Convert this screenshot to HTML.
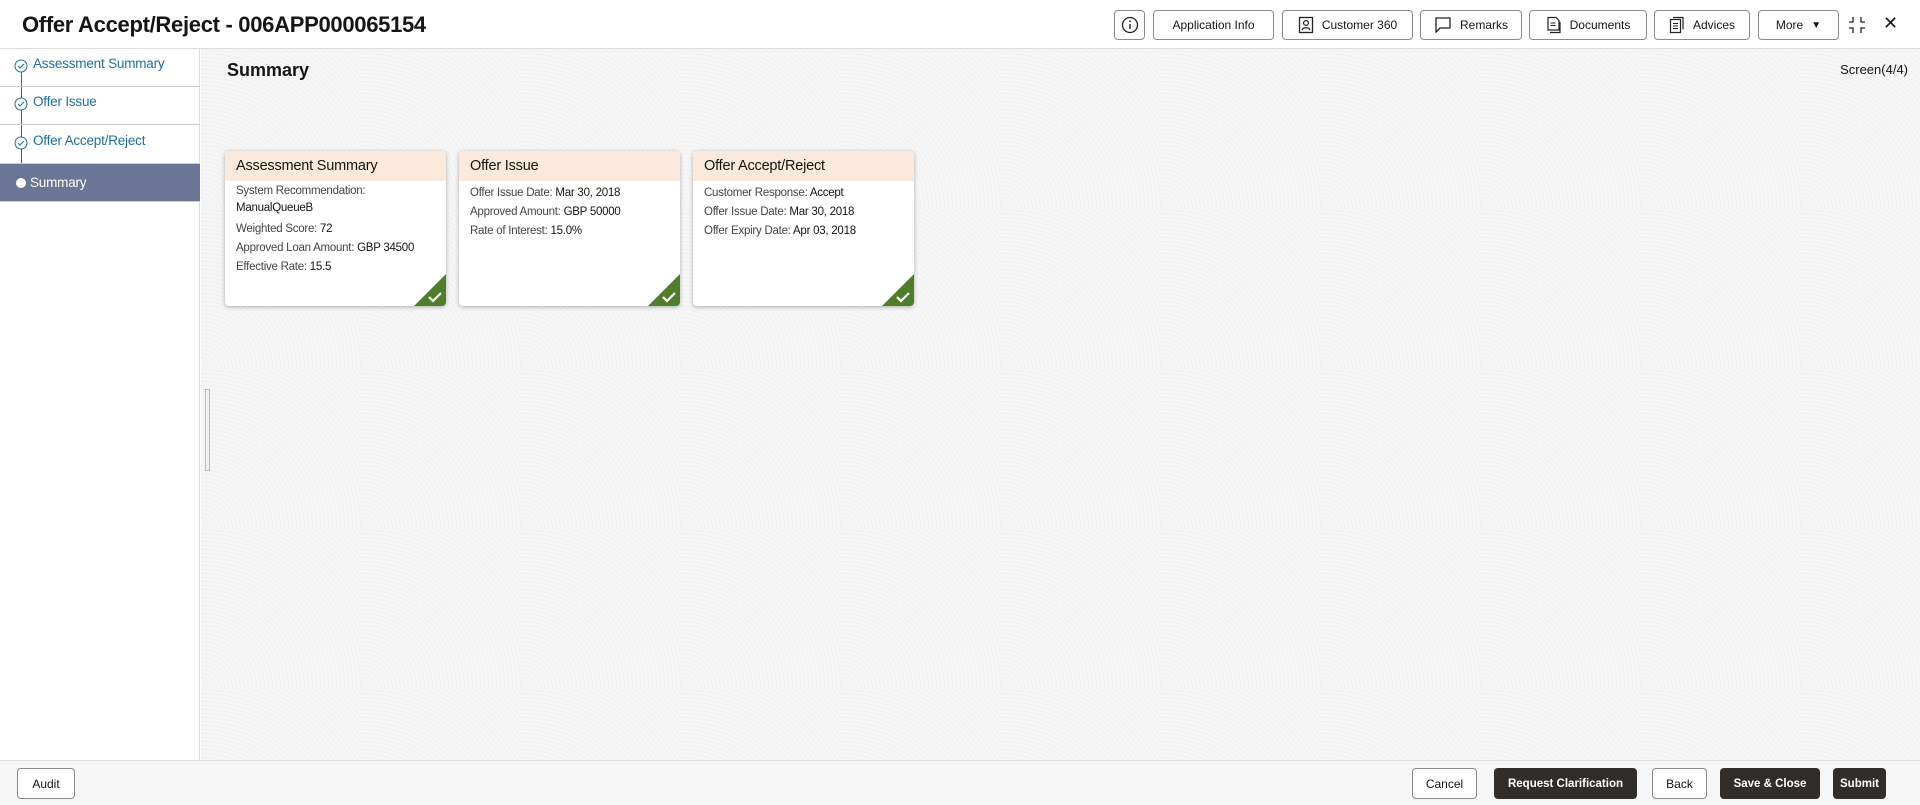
<!DOCTYPE html>
<html><head><meta charset="utf-8"><style>
*{box-sizing:border-box;margin:0;padding:0}
body{width:1920px;height:805px;overflow:hidden;font-family:"Liberation Sans",sans-serif;color:#161513;background:#fff;position:relative}
.hdr{position:absolute;left:0;top:0;width:1920px;height:49px;border-bottom:1px solid #ddd;background:#fff}
.title{position:absolute;left:22px;top:12px;font-size:22px;font-weight:bold;letter-spacing:-0.3px}
.btn{position:absolute;top:10px;height:30px;border:1px solid #8a8a8a;border-radius:4px;background:#fff;font-size:12px;display:flex;align-items:center;justify-content:center;gap:8px}
.side{position:absolute;left:0;top:49px;width:200px;height:711px;background:#fff;border-right:1px solid #ddd}
.it{position:absolute;left:0;width:200px;height:38px;border-bottom:1px solid #ccc;font-size:13.5px;letter-spacing:-0.2px;color:#1e6fa0;padding-left:33px;line-height:30px}
.it svg{position:absolute;left:14px;top:10px}
.main{position:absolute;left:201px;top:49px;width:1719px;height:711px;background-color:#f6f6f6;
background-image:repeating-radial-gradient(circle at 0 100%,rgba(0,0,0,0) 0 3px,rgba(0,0,0,.025) 3px 4px);background-size:160px 160px}
.card{position:absolute;top:102px;width:221px;height:155px;background:#fff;border-radius:4px;box-shadow:0 1px 4px rgba(0,0,0,.3);overflow:hidden}
.ch{height:30px;background:#fbeadb;font-size:14.5px;letter-spacing:-0.2px;padding:7px 11px}
.cb{padding:3px 11px;font-size:11.5px;letter-spacing:-0.25px;line-height:19px;color:#444;white-space:nowrap}
.cb b{font-weight:normal;color:#161513}
.tri{position:absolute;right:0;bottom:0;width:0;height:0;border-left:32px solid transparent;border-bottom:32px solid #4f7d2a}
.ck{position:absolute;right:3px;bottom:3px}
.foot{position:absolute;left:0;top:760px;width:1920px;height:45px;background:#f6f6f6;border-top:1px solid #ddd}
.fb{position:absolute;top:7px;height:31px;border-radius:4px;font-size:12px;display:flex;align-items:center;justify-content:center}
.o{border:1px solid #8a8a8a;background:#fff}
.d{background:#312d2a;color:#fff;font-weight:bold;font-size:11.5px}
</style></head><body>
<div class="hdr">
<div class="title">Offer Accept/Reject - 006APP000065154</div>
<div class="btn" style="left:1114px;width:31px"><svg width="18" height="18" viewBox="0 0 18 18"><circle cx="9" cy="9" r="7.5" fill="none" stroke="#222" stroke-width="1.3"/><line x1="9" y1="8" x2="9" y2="13" stroke="#222" stroke-width="1.4"/><circle cx="9" cy="5.3" r="0.9" fill="#222"/></svg></div>
<div class="btn" style="left:1153px;width:121px">Application Info</div>
<div class="btn" style="left:1282px;width:131px"><svg width="16" height="18" viewBox="0 0 16 18"><rect x="1.5" y="1.5" width="13" height="15" fill="none" stroke="#222" stroke-width="1.3"/><circle cx="8" cy="7" r="2.4" fill="none" stroke="#222" stroke-width="1.2"/><path d="M4 14c1-3 7-3 8 0" fill="none" stroke="#222" stroke-width="1.2"/></svg>Customer 360</div>
<div class="btn" style="left:1420px;width:102px"><svg width="18" height="18" viewBox="0 0 18 18"><path d="M2 2h14v10H6l-4 4z" fill="none" stroke="#222" stroke-width="1.3"/></svg>Remarks</div>
<div class="btn" style="left:1529px;width:118px"><svg width="16" height="18" viewBox="0 0 16 18"><path d="M2 1.5h8l3 3V14H2z" fill="none" stroke="#222" stroke-width="1.2"/><path d="M4 16.5h10V6" fill="none" stroke="#222" stroke-width="1.2"/><path d="M4.5 7h5M4.5 9.5h5" stroke="#222"/></svg>Documents</div>
<div class="btn" style="left:1654px;width:96px"><svg width="16" height="18" viewBox="0 0 16 18"><rect x="1.5" y="3.5" width="10" height="13" fill="none" stroke="#222" stroke-width="1.2"/><path d="M4 1.5h10v12" fill="none" stroke="#222" stroke-width="1.2"/><path d="M4 7.5h5M4 10h5M4 12.5h5" stroke="#222"/></svg>Advices</div>
<div class="btn" style="left:1758px;width:81px">More <span style="font-size:10px">▼</span></div>
<svg style="position:absolute;left:1847px;top:15px" width="20" height="20" viewBox="0 0 20 20"><path d="M6 2v5H2M14 2v5h4M6 18v-5H2M14 18v-5h4" fill="none" stroke="#222" stroke-width="1.3"/></svg>
<div style="position:absolute;left:1883px;top:13px;font-size:18px">✕</div>
</div>
<div class="side">
<div style="position:absolute;left:21px;top:16px;width:1px;height:120px;background:#1e6fa0"></div>
<div class="it" style="top:0;height:38px;background:transparent"><svg width="14" height="14" viewBox="0 0 14 14"><circle cx="7" cy="7" r="6" fill="#fff" stroke="#1e6fa0"/><path d="M4 7l2 2 4-4" fill="none" stroke="#1e6fa0"/></svg>Assessment Summary</div>
<div class="it" style="top:38px"><svg width="14" height="14" viewBox="0 0 14 14"><circle cx="7" cy="7" r="6" fill="#fff" stroke="#1e6fa0"/><path d="M4 7l2 2 4-4" fill="none" stroke="#1e6fa0"/></svg>Offer Issue</div>
<div class="it" style="top:77px"><svg width="14" height="14" viewBox="0 0 14 14"><circle cx="7" cy="7" r="6" fill="#fff" stroke="#1e6fa0"/><path d="M4 7l2 2 4-4" fill="none" stroke="#1e6fa0"/></svg>Offer Accept/Reject</div>
<div class="it" style="top:115px;height:38px;background:#6b7596;color:#fff;padding-left:30px;line-height:38px"><div style="position:absolute;left:16px;top:14px;width:10px;height:10px;border-radius:50%;background:#fff"></div>Summary</div>
</div>
<div class="main">
<div style="position:absolute;left:26px;top:11px;font-size:18px;font-weight:bold">Summary</div>
<div style="position:absolute;right:12px;top:13px;font-size:13px">Screen(4/4)</div>
<div style="position:absolute;left:4px;top:340px;width:5px;height:82px;border:1px solid #bbb;background:#f0f0f0"></div>
<div class="card" style="left:24px"><div class="ch">Assessment Summary</div><div class="cb" style="line-height:17px;padding-top:2px">System Recommendation:<br><b>ManualQueueB</b></div><div class="cb" style="padding-top:0">Weighted Score: <b>72</b><br>Approved Loan Amount: <b>GBP 34500</b><br>Effective Rate: <b>15.5</b></div><div class="tri"></div><svg class="ck" width="16" height="12" viewBox="0 0 16 12"><path d="M2 6l4 4 8-8" fill="none" stroke="#fff" stroke-width="2.2"/></svg></div>
<div class="card" style="left:258px"><div class="ch">Offer Issue</div><div class="cb">Offer Issue Date: <b>Mar 30, 2018</b><br>Approved Amount: <b>GBP 50000</b><br>Rate of Interest: <b>15.0%</b></div><div class="tri"></div><svg class="ck" width="16" height="12" viewBox="0 0 16 12"><path d="M2 6l4 4 8-8" fill="none" stroke="#fff" stroke-width="2.2"/></svg></div>
<div class="card" style="left:492px"><div class="ch">Offer Accept/Reject</div><div class="cb">Customer Response: <b>Accept</b><br>Offer Issue Date: <b>Mar 30, 2018</b><br>Offer Expiry Date: <b>Apr 03, 2018</b></div><div class="tri"></div><svg class="ck" width="16" height="12" viewBox="0 0 16 12"><path d="M2 6l4 4 8-8" fill="none" stroke="#fff" stroke-width="2.2"/></svg></div>
</div>
<div class="foot">
<div class="fb o" style="left:17px;width:58px">Audit</div>
<div class="fb o" style="left:1412px;width:65px">Cancel</div>
<div class="fb d" style="left:1494px;width:143px">Request Clarification</div>
<div class="fb o" style="left:1652px;width:55px">Back</div>
<div class="fb d" style="left:1720px;width:100px">Save &amp; Close</div>
<div class="fb d" style="left:1833px;width:53px">Submit</div>
</div>
</body></html>
